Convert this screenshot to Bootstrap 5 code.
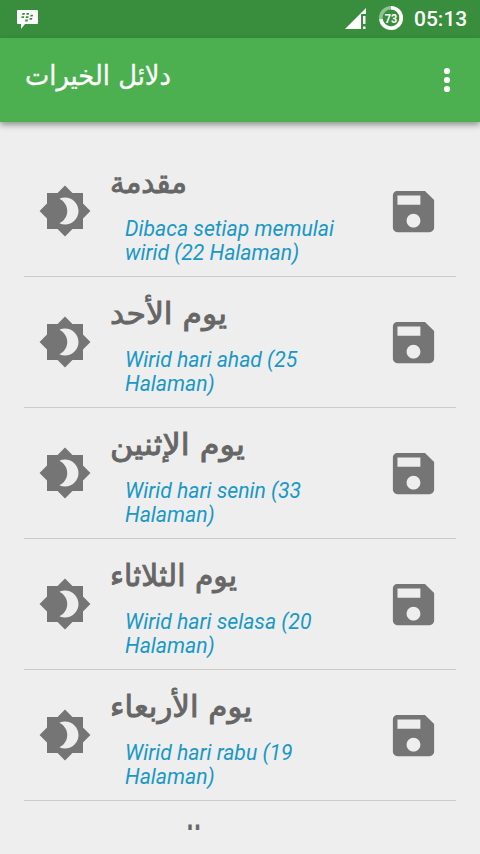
<!DOCTYPE html>
<html lang="id">
<head>
<meta charset="utf-8">
<meta name="viewport" content="width=device-width, initial-scale=1">
<title>دلائل الخيرات</title>
<link href="https://cdn.jsdelivr.net/npm/bootstrap@5.3.0/dist/css/bootstrap.min.css" rel="stylesheet">
<style>
body{background:#eee;font-family:Roboto,"Noto Sans",sans-serif}
svg{display:block;flex:none}
.status-bar{height:38px;background:#388e3c;padding:0 12px 0 16px}
.status-bar .clock{font-size:21px;font-weight:500;line-height:40px;width:54px;margin-left:9px}
.signal{margin-right:5px}
.app-bar{height:84px;background:#4caf50;padding:0 26px 0 24px;box-shadow:0 3px 6px rgba(0,0,0,.38);z-index:1}
.ar{font-family:"DejaVu Sans",sans-serif}
.wirid-list{height:684px;margin:24px 24px 0}
.wirid{height:131px;border-bottom:1px solid #cbcbcb;padding:0 14px}
.wirid>svg{margin-top:38px;fill:#757575}
.wirid .body-text{margin-left:18px;width:276px}
.wirid .title{fill:#666;stroke:#666;stroke-width:.9;font-size:30px;overflow:visible}
.wirid p{color:#1a98c6;font-style:italic;font-size:21.2px;line-height:24px;margin:6px 0 0 15px;white-space:nowrap}
</style>
</head>
<body class="vh-100 overflow-hidden">
<svg width="0" height="0" class="position-absolute">
  <symbol id="moon" viewBox="0 0 24 24"><path d="M20 15.31L23.31 12 20 8.69V4h-4.69L12 .69 8.69 4H4v4.69L.69 12 4 15.31V20h4.69L12 23.31 15.31 20H20v-4.69zM12 18c-.89 0-1.74-.2-2.5-.55C11.56 16.5 13 14.42 13 12s-1.44-4.5-3.5-5.45C10.26 6.2 11.11 6 12 6c3.31 0 6 2.69 6 6s-2.69 6-6 6z"/></symbol>
  <symbol id="save" viewBox="0 0 24 24"><path d="M17 3H5c-1.11 0-2 .9-2 2v14c0 1.1.89 2 2 2h14c1.1 0 2-.9 2-2V7l-4-4zm-5 16c-1.66 0-3-1.34-3-3s1.34-3 3-3 3 1.34 3 3-1.34 3-3 3zm3-10H5V5h10v4z"/></symbol>
</svg>
<header class="status-bar d-flex align-items-center text-white">
  <svg class="me-auto" width="23" height="22" viewBox="0 0 23 22"><path fill="#fff" d="M2 2h19a1 1 0 0 1 1 1v12a1 1 0 0 1-1 1H9l-4 5v-5H2a1 1 0 0 1-1-1V3a1 1 0 0 1 1-1z"/><path fill="#388e3c" d="M6.400 5h2.600l-.4 1.800H6zM10.600 5h2.600l-.4 1.800h-2.600zM5.700 8.300h2.600l-.4 1.800H5.300zM10 8.300h2.600l-.4 1.800H9.600zM14.500 6.800h2.600l-.4 1.800h-2.600zM13.800 10h2.600l-.4 1.800h-2.600zM9.400 11.600H12l-.4 1.800H9z"/></svg>
  <svg class="signal" width="27" height="24" viewBox="0 0 27 24"><path fill="#fff" d="M0 22L21 1v6h-5v15z"/><path fill="#fff" d="M18 9h2.500v8H18zM18 19.500h2.500V22H18z"/></svg>
  <svg width="28" height="28" viewBox="0 0 28 28"><circle cx="14" cy="13" r="10.200" fill="none" stroke="#8ec391" stroke-width="3.600"/><circle cx="14" cy="13" r="10.200" fill="none" stroke="#fff" stroke-width="3.600" pathLength="100" stroke-dasharray="73 27" transform="rotate(-90 14 13)"/><text x="14" y="17.500" text-anchor="middle" font-size="12" font-weight="700" fill="#fff" textLength="12.500" lengthAdjust="spacingAndGlyphs">73</text></svg>
  <span class="clock text-nowrap">05:13</span>
</header>
<nav class="app-bar d-flex align-items-center justify-content-between position-relative">
  <svg class="ar" width="160" height="84"><text x="1" y="47" font-size="27" fill="#fff" stroke="#fff" stroke-width=".3" textLength="146" lengthAdjust="spacingAndGlyphs">دلائل الخيرات</text></svg>
  <svg width="14" height="26" viewBox="0 0 14 26" fill="#fff"><circle cx="7" cy="4" r="3.100"/><circle cx="7" cy="13" r="3.100"/><circle cx="7" cy="22" r="3.100"/></svg>
</nav>
<main class="wirid-list overflow-hidden">
  <div class="wirid d-flex"><svg width="54" height="54"><use href="#moon"/></svg>
    <div class="body-text"><svg class="title ar" width="200" height="65"><text y="47" textLength="77" lengthAdjust="spacingAndGlyphs">مقدمة</text></svg><p>Dibaca setiap memulai<br>wirid (22 Halaman)</p></div>
    <svg width="55" height="55"><use href="#save"/></svg></div>
  <div class="wirid d-flex"><svg width="54" height="54"><use href="#moon"/></svg>
    <div class="body-text"><svg class="title ar" width="200" height="65"><text y="47" textLength="117" lengthAdjust="spacingAndGlyphs">يوم الأحد</text></svg><p>Wirid hari ahad (25<br>Halaman)</p></div>
    <svg width="55" height="55"><use href="#save"/></svg></div>
  <div class="wirid d-flex"><svg width="54" height="54"><use href="#moon"/></svg>
    <div class="body-text"><svg class="title ar" width="200" height="65"><text y="47" textLength="135" lengthAdjust="spacingAndGlyphs">يوم الإثنين</text></svg><p>Wirid hari senin (33<br>Halaman)</p></div>
    <svg width="55" height="55"><use href="#save"/></svg></div>
  <div class="wirid d-flex"><svg width="54" height="54"><use href="#moon"/></svg>
    <div class="body-text"><svg class="title ar" width="200" height="65"><text y="47" textLength="127" lengthAdjust="spacingAndGlyphs">يوم الثلاثاء</text></svg><p>Wirid hari selasa (20<br>Halaman)</p></div>
    <svg width="55" height="55"><use href="#save"/></svg></div>
  <div class="wirid d-flex"><svg width="54" height="54"><use href="#moon"/></svg>
    <div class="body-text"><svg class="title ar" width="200" height="65"><text y="47" textLength="142" lengthAdjust="spacingAndGlyphs">يوم الأربعاء</text></svg><p>Wirid hari rabu (19<br>Halaman)</p></div>
    <svg width="55" height="55"><use href="#save"/></svg></div>
  <div class="wirid d-flex"><svg width="54" height="54"><use href="#moon"/></svg>
    <div class="body-text"><svg class="title ar" width="200" height="65"><text y="47" textLength="138" lengthAdjust="spacingAndGlyphs">يوم الخميس</text></svg></div></div>
</main>
<script src="https://cdn.jsdelivr.net/npm/bootstrap@5.3.0/dist/js/bootstrap.bundle.min.js"></script>
</body>
</html>
